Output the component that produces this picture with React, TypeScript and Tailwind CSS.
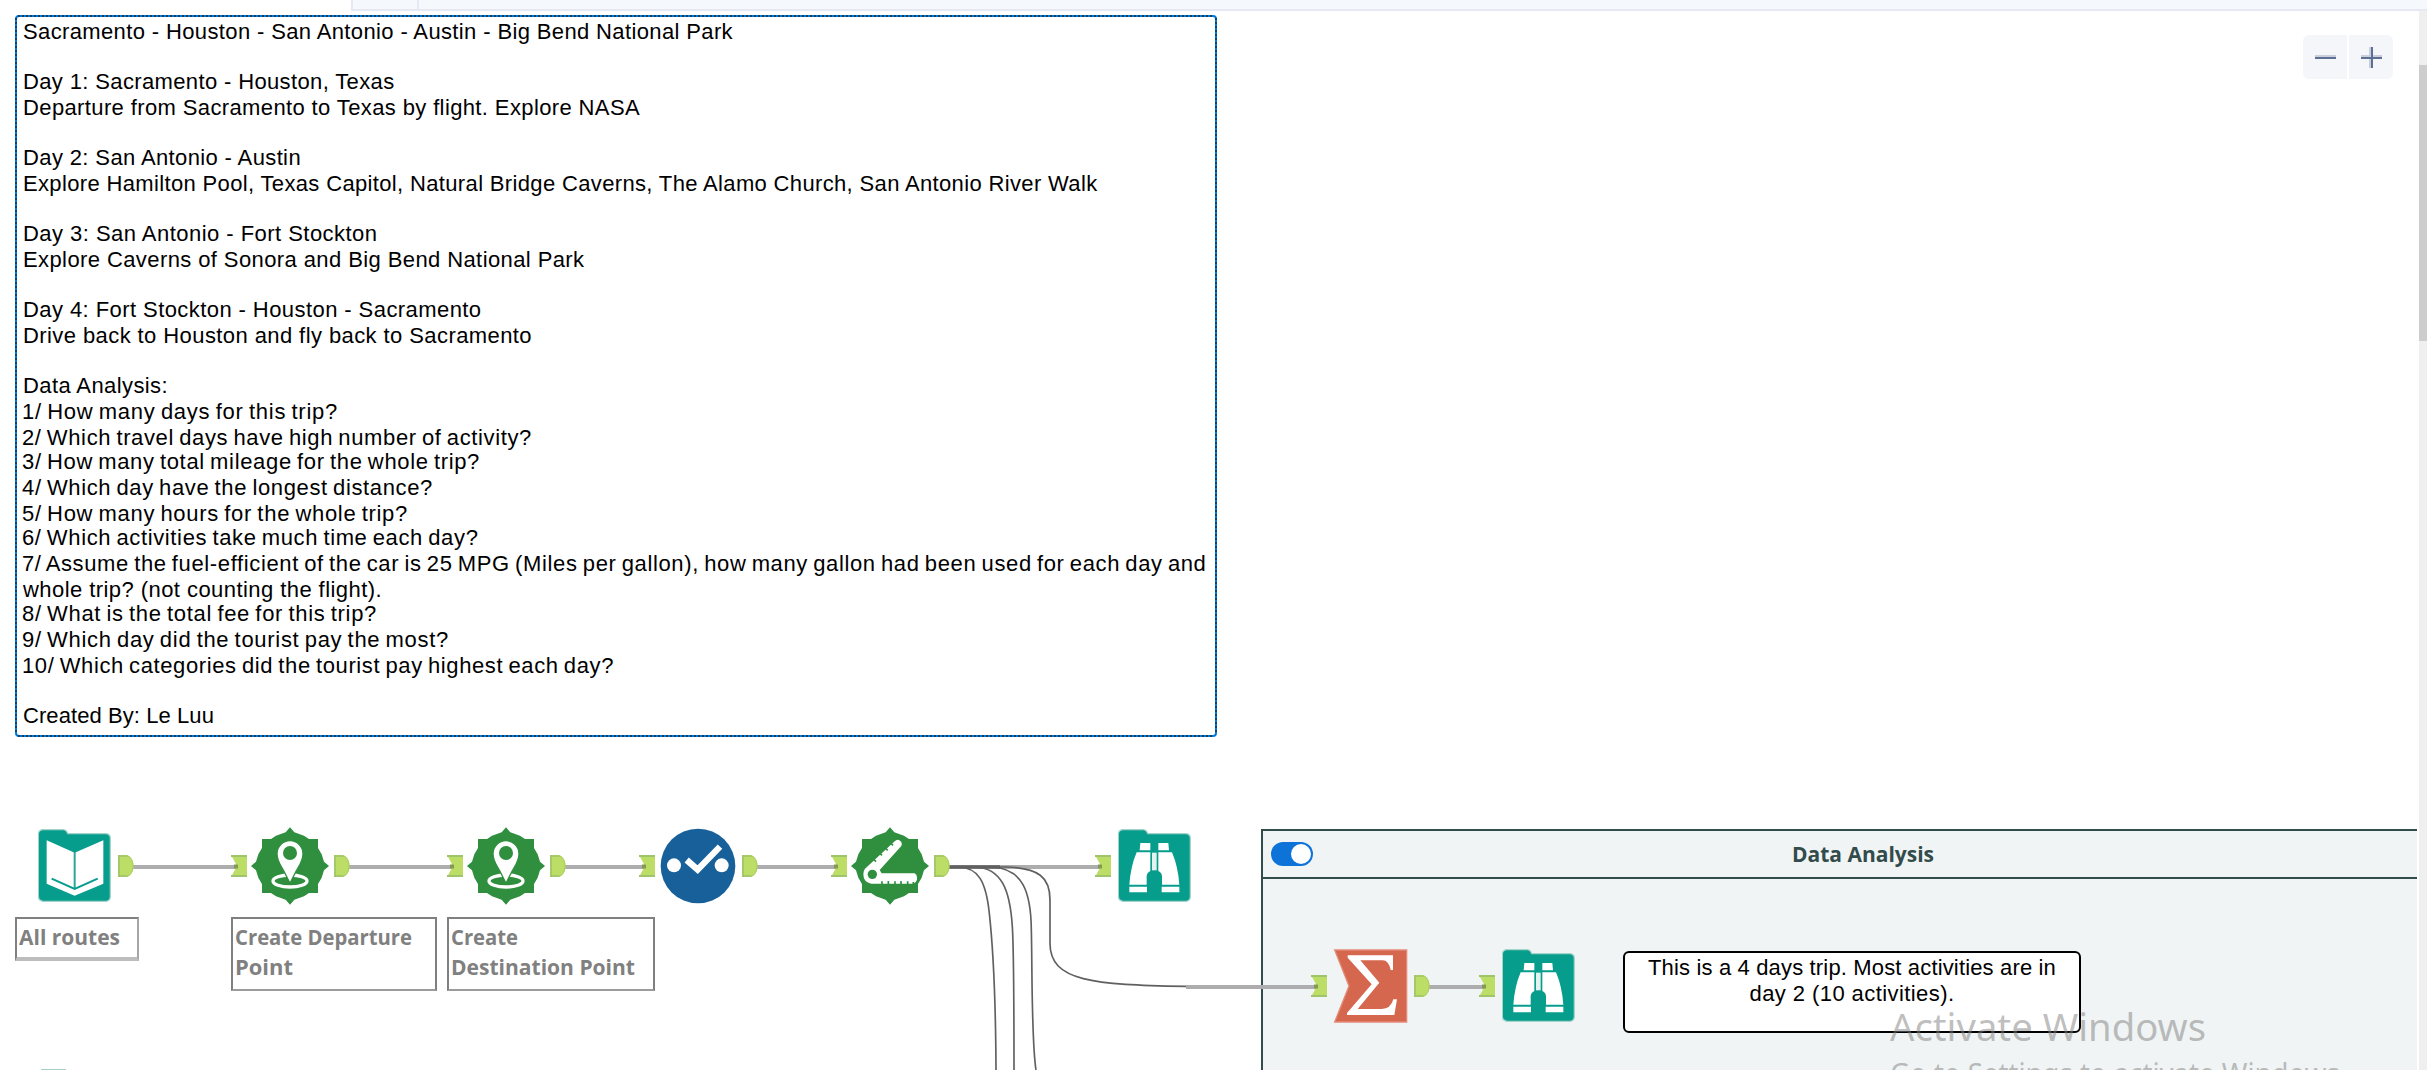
import React, { useLayoutEffect, useRef } from "react";

type FitProps = { text: string; width: number; mode?: "track" | "scale"; className?: string };

/* Renders a single line of text adjusted to an exact advance width. */
function Fit({ text, width, mode = "track", className = "" }: FitProps) {
  const ref = useRef<HTMLSpanElement>(null);
  useLayoutEffect(() => {
    const el = ref.current;
    if (!el) return;
    el.style.letterSpacing = "0px";
    el.style.transform = "none";
    const natural = el.getBoundingClientRect().width;
    if (mode === "track") el.style.letterSpacing = `${(width - natural) / text.length}px`;
    else el.style.transform = `scaleX(${width / natural})`;
  }, [text, width, mode]);
  return (
    <span ref={ref} className={`inline-block origin-left whitespace-pre ${className}`}>
      {text}
    </span>
  );
}

const lines: [string, number][] = [
  ["Sacramento - Houston - San Antonio - Austin - Big Bend National Park", 710],
  ["", 0],
  ["Day 1: Sacramento - Houston, Texas", 371.5],
  ["Departure from Sacramento to Texas by flight. Explore NASA", 617],
  ["", 0],
  ["Day 2: San Antonio - Austin", 278],
  ["Explore Hamilton Pool, Texas Capitol, Natural Bridge Caverns, The Alamo Church, San Antonio River Walk", 1074.5],
  ["", 0],
  ["Day 3: San Antonio - Fort Stockton", 354.5],
  ["Explore Caverns of Sonora and Big Bend National Park", 561.5],
  ["", 0],
  ["Day 4: Fort Stockton - Houston - Sacramento", 458.5],
  ["Drive back to Houston and fly back to Sacramento", 509],
  ["", 0],
  ["Data Analysis:", 145],
  ["1/ How many days for this trip?", 316],
  ["2/ Which travel days have high number of activity?", 510],
  ["3/ How many total mileage for the whole trip?", 458],
  ["4/ Which day have the longest distance?", 411],
  ["5/ How many hours for the whole trip?", 386],
  ["6/ Which activities take much time each day?", 456.5],
  ["7/ Assume the fuel-efficient of the car is 25 MPG (Miles per gallon), how many gallon had been used for each day and", 1184.5],
  ["whole trip? (not counting the flight).", 359],
  ["8/ What is the total fee for this trip?", 355],
  ["9/ Which day did the tourist pay the most?", 427],
  ["10/ Which categories did the tourist pay highest each day?", 592],
  ["", 0],
  ["Created By: Le Luu", 191],
];

function Comment() {
  return (
    <section className="relative h-[722px] w-[1202px] bg-white pl-2 pt-1 text-[22px] text-black">
      <svg className="absolute inset-0" width="1202" height="722" fill="none" strokeWidth="2">
        <rect x="1" y="1" width="1200" height="720" rx="3" stroke="#0078d7" />
        <path d="M3 1H1199M1201 3V719M3 721H1199M1 3V719" stroke="#123f63" strokeDasharray="2 2" />
      </svg>
      {lines.map(([text, width], i) => (
        <div key={i} className={i % 3 === 1 ? "h-[24px] leading-[26px]" : "h-[26px] leading-[26px]"}>
          {text && <Fit text={text} width={width} className={/^\d+\//.test(text) ? "-ml-px [word-spacing:-1.5px]" : ""} />}
        </div>
      ))}
    </section>
  );
}

function ZoomControls() {
  return (
    <div className="mt-5 flex h-[44px] gap-[2px]">
      <button className="size-[44px] rounded-l-md bg-[#f4f6fa]">
        <svg width="44" height="44">
          <path d="M12 21H33" stroke="#c9cfdc" strokeWidth="2" />
          <path d="M12 23H33" stroke="#5d6f92" strokeWidth="2" />
        </svg>
      </button>
      <button className="size-[44px] rounded-r-md bg-[#f4f6fa]">
        <svg width="44" height="44">
          <path d="M12 21H33M21 12V33" stroke="#c9cfdc" strokeWidth="2" />
          <path d="M12 23H33M23 12V33" stroke="#5d6f92" strokeWidth="2" />
        </svg>
      </button>
    </div>
  );
}

function InAnchor({ className }: { className: string }) {
  return (
    <svg className={`absolute ${className}`} width="16" height="22" viewBox="0 0 16 22">
      <path d="M0 0H16V22H0L6 11Z" fill="#bcde67" />
      <path d="M0 1H16M0 21H16" stroke="#9fc46c" strokeWidth="2" />
      <path d="M3 9.500H7V13.500H3Z" fill="#839a50" />
    </svg>
  );
}

function OutAnchor({ className }: { className: string }) {
  return (
    <svg className={`absolute ${className}`} width="16" height="22" viewBox="0 0 16 22">
      <path d="M0 0H9C13 1 15.500 6 15.500 11S13 21 9 22H0Z" fill="#bcde67" />
      <path d="M0 1H9.500M0 21H9.500M1 0V22" stroke="#9fc46c" strokeWidth="1.600" />
      <path d="M9 1C13 2 15 6 15 11S13 20 9 21" fill="none" stroke="#a8cc62" strokeWidth="1" />
    </svg>
  );
}

function Folder({ className, children }: { className: string; children: React.ReactNode }) {
  return (
    <svg className={`absolute ${className}`} width="73" height="73" viewBox="954 58 219 219">
      <path
        d="M968 60H1030Q1040 61 1043 72H1158Q1171 73 1171 86V262Q1170 274 1157 275H969Q955 273 955 260V72Q957 61 968 60Z"
        fill="#079d8d"
        stroke="#a4d3ca"
        strokeWidth="4"
      />
      {children}
    </svg>
  );
}

function Book() {
  return (
    <g transform="translate(842 0)">
      <path d="M138 92L222 129L308 92V222L222 258L138 222Z" fill="#fff" />
      <path d="M222 127V236" stroke="#2ba799" strokeWidth="6" />
      <path d="M153 207L222 238L291 207" fill="none" stroke="#079d8d" strokeWidth="6" />
    </g>
  );
}

function Binoculars() {
  return (
    <g fill="#fff">
      <path d="M1021 100H1051V122H1019ZM1075 100H1105L1107 122H1075Z" />
      <path d="M1010 128H1051V184Q1040 190 1040 200V225H988Q992 170 1010 128Z" />
      <path d="M1116 128H1075V184Q1086 190 1086 200V225H1138Q1134 170 1116 128Z" />
      <path d="M988 231H1041V248H988ZM1085 231H1138V248H1085Z" />
      <path d="M1056 129H1070V182H1056Z" fill="#e2f3f0" />
    </g>
  );
}

function Burst({ className, children }: { className: string; children: React.ReactNode }) {
  return (
    <svg className={`absolute ${className}`} width="78" height="78" viewBox="-117 -117 234 234">
      <path
        d="M0 -116L13 -101L42 -91L57 -81H84V-54L95 -35L102 -13L117 0L102 13L95 35L84 54V81H57L42 91L13 101L0 116L-13 101L-42 91L-57 81H-84V54L-95 35L-102 13L-117 0L-102 -13L-95 -35L-84 -54V-81H-57L-42 -91L-13 -101Z"
        fill="#2f8f3f"
      />
      {children}
    </svg>
  );
}

function Pin() {
  return (
    <>
      <ellipse cx="0" cy="45" rx="51" ry="18" fill="none" stroke="#fff" strokeWidth="10" />
      <path
        d="M0 52L-14 24C-23 5 -39 -12 -39 -37A39 39 0 0 1 39 -37C39 -12 23 5 14 24Z"
        fill="#fff"
        stroke="#2f8f3f"
        strokeWidth="4"
      />
      <circle cx="0" cy="-39" r="21" fill="#2f8f3f" />
    </>
  );
}

function FoldingRuler() {
  return (
    <>
      <path d="M-75 8L14 -74Q22 -82 30 -76Q38 -70 34 -60L-31 12L-25 22H74Q81 26 81 34V41Q78 51 70 53H-56Q-80 49 -80 25Q-80 14 -75 8Z" fill="#fff" />
      <circle cx="-53" cy="25" r="14" fill="#2f8f3f" />
      <path
        d="M-49 -20L-42 -13M-30 -38L-24 -32M-13 -53L-7 -47M3 -68L9 -62M-24 54V46M-5 54V45M15 54V46M33 54V45M53 54V46M70 54V48"
        stroke="#2f8f3f"
        strokeWidth="5"
      />
    </>
  );
}

function ToolLabel({ className, rows }: { className: string; rows: [string, number][] }) {
  return (
    <div className={`absolute border-2 border-[#808080] bg-white pl-[2px] pt-[2px] font-['Open_Sans'] text-[22px] font-bold leading-[30px] text-[#808080] ${className}`}>
      {rows.map(([text, width]) => (
        <div key={text} className="h-[30px]">
          <Fit text={text} width={width} mode="scale" />
        </div>
      ))}
    </div>
  );
}

function Wires() {
  return (
    <svg className="absolute left-0 top-[810px]" width="1500" height="260" fill="none">
      <path
        d="M133 57H236M349 57H453M565 57H645M757 57H837M948 57H1101M1186 177H1317M1428 177H1485"
        stroke="#adadad"
        strokeWidth="4"
      />
      <g transform="translate(800 0) scale(.33333)" stroke="#606060" strokeWidth="5">
        <path d="M442 171H475C535 172 558 215 568 310C580 420 587 560 588 780" />
        <path d="M442 171H525C605 174 630 240 637 350C642 430 642 520 642 780" />
        <path d="M442 171H580C665 178 693 240 694 360C697 480 694 690 708 780" />
        <path d="M442 171H620C715 175 750 200 750 270V400C750 515 880 524 1158 529" />
        <path d="M442 171H600" strokeWidth="10" />
      </g>
    </svg>
  );
}

function AnalysisContainer() {
  return (
    <section className="absolute left-[1261px] top-[829px] flex h-[241px] w-[1156px] flex-col border-l-2 border-t-2 border-[#324b4b] bg-[#f0f4f5]">
      <header className="flex h-[48px] shrink-0 items-center border-b-2 border-[#324b4b] pl-2">
        <span className="flex h-6 w-[42px] items-center justify-end rounded-full bg-[#0d73d8] pr-[2px]">
          <span className="size-5 rounded-full bg-white" />
        </span>
        <h2 className="ml-[479px] pb-[3px] font-['Open_Sans'] text-[22px] font-bold leading-[30px] text-[#324b4b]">
          <Fit text="Data Analysis" width={142} mode="scale" />
        </h2>
      </header>
    </section>
  );
}

export default function App() {
  return (
    <main className="relative flex h-[1070px] w-[2427px] flex-col overflow-hidden bg-white font-['Liberation_Sans',sans-serif]">
      <div className="ml-[351px] flex h-[11px] shrink-0 border-b-2 border-l-2 border-[#e6e9f3] bg-[#f5f8fd]">
        <div className="w-[66px] border-r-2 border-[#e6e9f3]" />
      </div>

      <div className="flex min-h-0 flex-1">
        <div className="flex flex-1 justify-between pl-[15px] pr-[26px] pt-1">
          <Comment />
          <ZoomControls />
        </div>
        <div className="w-2 bg-[#efefef] pt-[54px]">
          <div className="h-[276px] bg-[#cdcdcd]" />
        </div>
      </div>

      <AnalysisContainer />
      <Wires />

      <Folder className="left-[37.500px] top-[829px]"><Book /></Folder>
      <OutAnchor className="left-[118px] top-[855px]" />
      <InAnchor className="left-[231px] top-[855px]" />
      <Burst className="left-[251px] top-[827px]"><Pin /></Burst>
      <OutAnchor className="left-[334px] top-[855px]" />
      <InAnchor className="left-[447px] top-[855px]" />
      <Burst className="left-[467px] top-[827px]"><Pin /></Burst>
      <OutAnchor className="left-[550px] top-[855px]" />
      <InAnchor className="left-[639px] top-[855px]" />
      <svg className="absolute left-[660px] top-[828px]" width="76" height="76" viewBox="-114 -114 228 228">
        <circle r="112" fill="#17609a" />
        <circle cx="-72" cy="-2" r="21" fill="#fff" />
        <circle cx="71" cy="-2" r="21" fill="#fff" />
        <path d="M-34 -18L-1 11L66 -58" fill="none" stroke="#fff" strokeWidth="19" />
      </svg>
      <OutAnchor className="left-[742px] top-[855px]" />
      <InAnchor className="left-[831px] top-[855px]" />
      <Burst className="left-[851px] top-[827px]"><FoldingRuler /></Burst>
      <OutAnchor className="left-[934px] top-[855px]" />
      <InAnchor className="left-[1095px] top-[855px]" />
      <Folder className="left-[1118px] top-[829px]"><Binoculars /></Folder>

      <ToolLabel className="left-[15px] top-[917px] h-[44px] w-[124px] border-b-4 border-r-[#a6a6a6] border-b-[#bdbdbd]" rows={[["All routes", 101]]} />
      <ToolLabel className="left-[231px] top-[917px] h-[74px] w-[206px] border-b-[#9c9c9c]" rows={[["Create Departure", 177], ["Point", 58]]} />
      <ToolLabel className="left-[447px] top-[917px] h-[74px] w-[208px] border-b-[#9c9c9c]" rows={[["Create", 67], ["Destination Point", 184]]} />
      <div className="absolute left-[41px] top-[1069px] h-px w-[25px] bg-[#a9cfc5]" />

      <InAnchor className="left-[1311px] top-[975px]" />
      <svg className="absolute left-[1333px] top-[949px]" width="75" height="74" viewBox="279 417 225 222">
        <path d="M284 420H500V636H284L327 528Z" fill="#d4674e" stroke="#e58b78" strokeWidth="4" />
        <path
          d="M323 436H459V480H452Q446 451 428 451H361L418 518L353 597H425Q452 597 460 568H471L463 615H321V609L395 523L323 443Z"
          fill="#fff"
        />
      </svg>
      <OutAnchor className="left-[1414px] top-[975px]" />
      <InAnchor className="left-[1479px] top-[975px]" />
      <Folder className="left-[1501.500px] top-[949px]"><Binoculars /></Folder>

      <div className="absolute left-[1623px] top-[951px] flex h-[82px] w-[458px] flex-col items-center rounded-md border-2 border-black bg-white pt-[2px] text-[22px] leading-[26px] text-black">
        <Fit text="This is a 4 days trip. Most activities are in" width={408} />
        <Fit text="day 2 (10 activities)." width={205} />
      </div>

      <div className="absolute left-[1890px] top-[997px] font-['Noto_Sans'] font-normal text-[#808080]/50">
        <div className="h-[58px] text-[39px] leading-[58px]">
          <Fit text="Activate Windows" width={316} mode="scale" />
        </div>
        <div className="h-[40px] text-[29px] leading-[36px]">
          <Fit text="Go to Settings to activate Windows." width={457} mode="scale" />
        </div>
      </div>
    </main>
  );
}
